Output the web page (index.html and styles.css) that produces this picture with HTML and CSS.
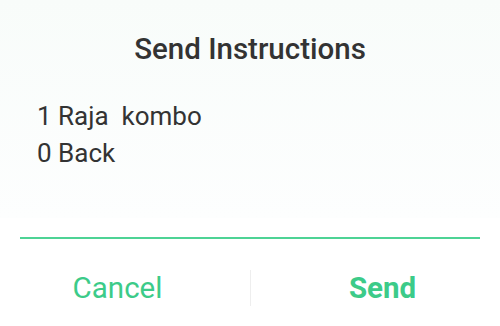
FILE: index.html
```html
<!DOCTYPE html>
<html>
<head>
<meta charset="utf-8">
<link rel="stylesheet" href="styles.css">
</head>
<body>
<div class="dialog">
  <div class="content">
    <h1 class="title">Send Instructions</h1>
    <div class="message">
      <div class="line">1 Raja&nbsp; kombo</div>
      <div class="line">0 Back</div>
    </div>
  </div>
  <div class="input-area">
    <div class="input-line"></div>
  </div>
  <div class="actions">
    <div class="btn cancel">Cancel</div>
    <div class="divider"></div>
    <div class="btn send">Send</div>
  </div>
</div>
</body>
</html>
```
FILE: styles.css
```css
html, body {
  margin: 0;
  padding: 0;
  background: #ffffff;
}
.dialog {
  width: 500px;
  height: 326px;
  font-family: Roboto, "Noto Sans", sans-serif;
  display: flex;
  flex-direction: column;
}
.content {
  height: 218px;
  background: linear-gradient(#f8fcfa, #fdfefe);
  box-sizing: border-box;
  padding-top: 31px;
}
.title {
  margin: 0;
  text-align: center;
  font-size: 29.5px;
  font-weight: 500;
  color: #333333;
  line-height: 36px;
}
.message {
  margin-top: 31px;
  padding-left: 37px;
  font-size: 26px;
  color: #333333;
  line-height: 37px;
}
.input-area {
  padding: 19px 20px 0 20px;
}
.input-line {
  height: 2px;
  background: #4dd395;
}
.actions {
  flex: 1;
  display: flex;
  align-items: center;
  padding-top: 11px;
}
.btn {
  flex: 1;
  text-align: center;
  font-size: 29.5px;
  color: #3ccb89;
}
.cancel {
  font-weight: 400;
  padding-right: 15px;
}
.send {
  font-weight: 700;
  padding-left: 14px;
}
.divider {
  width: 1px;
  height: 36px;
  background: #eeeeee;
}
```
